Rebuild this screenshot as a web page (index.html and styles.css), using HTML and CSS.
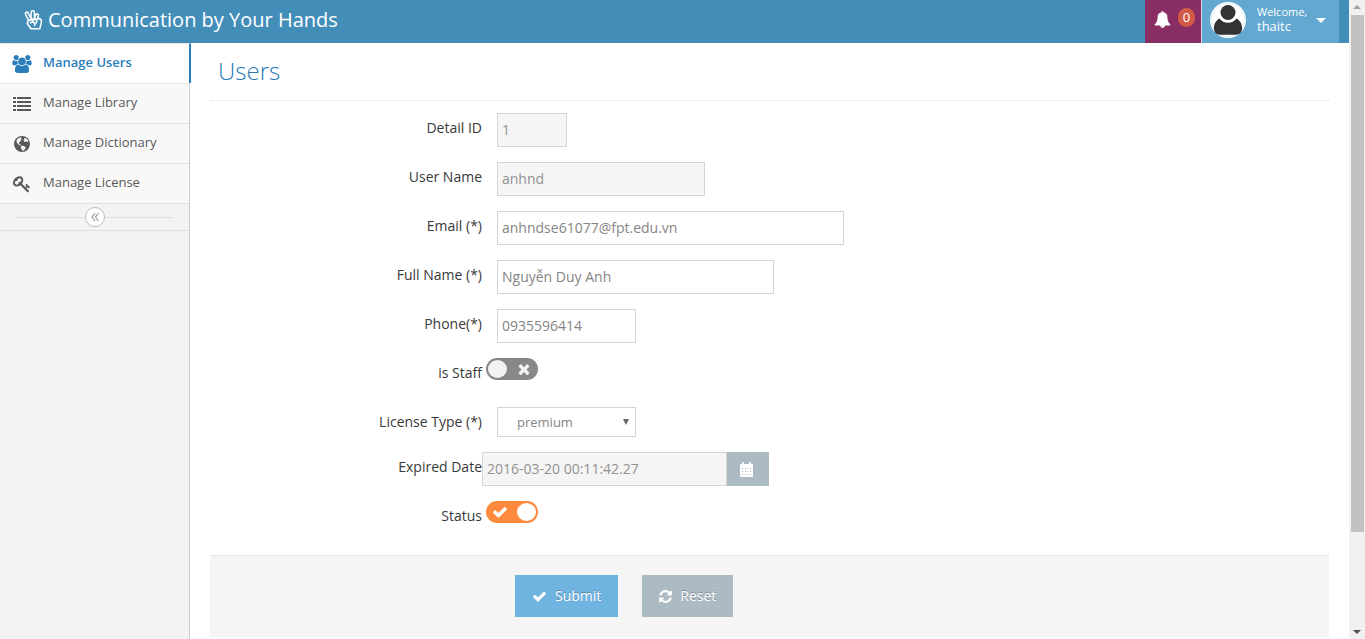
FILE: index.html
```html
<!DOCTYPE html>
<html lang="en">
<head>
<meta charset="utf-8">
<title>Communication by Your Hands</title>
<link rel="stylesheet" href="styles.css">
</head>
<body>
<svg class="sprite" aria-hidden="true">
  <symbol id="check" viewBox="0 0 1792 1792"><path d="M1671 566q0 40-28 68l-724 724-136 136q-28 28-68 28t-68-28l-136-136-362-362q-28-28-28-68t28-68l136-136q28-28 68-28t68 28l294 295 656-657q28-28 68-28t68 28l136 136q28 28 28 68z"/></symbol>
  <symbol id="times" viewBox="0 0 1792 1792"><path d="M1490 1322q0 40-28 68l-136 136q-28 28-68 28t-68-28l-294-294-294 294q-28 28-68 28t-68-28l-136-136q-28-28-28-68t28-68l294-294-294-294q-28-28-28-68t28-68l136-136q28-28 68-28t68 28l294 294 294-294q28-28 68-28t68 28l136 136q28 28 28 68t-28 68l-294 294 294 294q28 28 28 68z"/></symbol>
  <symbol id="refresh" viewBox="0 0 1792 1792"><path d="M1639 1056q0 5-1 7-64 268-268 434.500t-478 166.500q-146 0-282.500-55t-243.500-157l-129 129q-19 19-45 19t-45-19-19-45v-448q0-26 19-45t45-19h448q26 0 45 19t19 45-19 45l-137 137q71 66 161 102t187 36q134 0 250-65t186-179q11-17 53-117 8-23 30-23h192q13 0 22.500 9.500t9.500 22.500zm25-800v448q0 26-19 45t-45 19h-448q-26 0-45-19t-19-45 19-45l138-138q-148-137-349-137-134 0-250 65t-186 179q-11 17-53 117-8 23-30 23h-199q-13 0-22.500-9.500t-9.500-22.500v-7q65-268 270-434.500t480-166.500q146 0 284 55.500t245 156.500l130-129q19-19 45-19t45 19 19 45z"/></symbol>
  <symbol id="users" viewBox="-64 0 1920 1792"><path d="M529 896q-162 5-265 128h-134q-82 0-138-40.500t-56-118.500q0-353 124-353 6 0 43.500 21t97.500 42.500 119 21.500q67 0 133-23-5 37-5 66 0 139 81 256zm1071 637q0 120-73 189.500t-194 69.500h-874q-121 0-194-69.500t-73-189.500q0-53 3.500-103.500t14-109 26.500-108.500 43-97.500 62-81 85.500-53.500 111.500-20q10 0 43 21.500t73 48 107 48 135 21.500 135-21.500 107-48 73-48 43-21.500q61 0 111.500 20t85.500 53.500 62 81 43 97.500 26.500 108.500 14 109 3.500 103.500zm-1024-1277q0 106-75 181t-181 75-181-75-75-181 75-181 181-75 181 75 75 181zm704 384q0 159-112.500 271.500t-271.500 112.500-271.500-112.500-112.500-271.500 112.500-271.500 271.500-112.500 271.500 112.500 112.500 271.500zm576 225q0 78-56 118.500t-138 40.500h-134q-103-123-265-128 81-117 81-256 0-29-5-66 66 23 133 23 59 0 119-21.500t97.500-42.500 43.500-21q124 0 124 353zm-128-609q0 106-75 181t-181 75-181-75-75-181 75-181 181-75 181 75 75 181z"/></symbol>
  <symbol id="list" viewBox="0 0 18 18"><path d="M0 2h3v2H0zM4 2h14v2H4zM0 6h3v2H0zM4 6h14v2H4zM0 10h3v2H0zM4 10h14v2H4zM0 14h3v2H0zM4 14h14v2H4z"/></symbol>
  <symbol id="globe" viewBox="0 0 18 18"><circle cx="9" cy="9" r="8"/><path fill="#f8f8f8" d="M5 3.500L7.500 2.200l1 .8-.8 1.300.9.8-1.500 1.200L5.800 8l.8 1.400 1.700.6-.8.8L5 9.300 3.500 6.800l.2-1.700zM11 3l2.500.6 1.800 2.200-.4 1.500-1.700-1-1.400.6-1.300-1.200.9-1.200zM8.500 10.700l2.500.3 1.800 1.500-.9 1.800-2 1.900-1-1.800-1.200-1.900z"/></symbol>
  <symbol id="key" viewBox="0 0 1792 1792"><path d="M832 512q0-80-56-136t-136-56-136 56-56 136q0 42 19 83-41-19-83-19-80 0-136 56t-56 136 56 136 136 56 136-56 56-136q0-42-19-83 41 19 83 19 80 0 136-56t56-136zm851 704q0 17-49 66t-66 49q-9 0-28.500-16t-36.500-33-38.500-40-24.500-26l-96 96 220 220q28 28 28 68 0 42-39 81t-81 39q-40 0-68-28l-671-671q-176 131-365 131-163 0-265.500-102.500t-102.500-265.500q0-160 95-313t248-248 313-95q163 0 265.500 102.500t102.500 265.500q0 189-131 365l355 355 96-96q-3-3-26-24.500t-40-38.500-33-36.500-16-28.500q0-17 49-66t66-49q13 0 23 10 6 6 46 44.500t82 79.500 86.500 86 73 78 28.500 41z"/></symbol>
  <symbol id="bell" viewBox="0 0 1792 1792"><path d="M912 1696q0-16-16-16-59 0-101.500-42.500t-42.500-101.500q0-16-16-16t-16 16q0 73 51.500 124.500t124.500 51.500q16 0 16-16zm816-288q0 52-38 90t-90 38h-448q0 106-75 181t-181 75-181-75-75-181h-448q-52 0-90-38t-38-90q50-42 91-88t85-119.500 74.500-158.500 50-206 19.500-260q0-152 117-282.500t307-158.500q-8-19-8-39 0-40 28-68t68-28 68 28 28 68q0 20-8 39 190 28 307 158.500t117 282.500q0 139 19.500 260t50 206 74.500 158.500 85 119.500 91 88z"/></symbol>
  <symbol id="calendar" viewBox="0 0 15 15"><path fill-rule="evenodd" d="M3 2V1q0-1 1-1t1 1v1h5V1q0-1 1-1t1 1v1h1q1 0 1 1v11q0 1-1 1H2q-1 0-1-1V3q0-1 1-1zM3 6v1h1V6zM6 6v1h1V6zM8 6v1h1V6zM11 6v1h1V6zM3 9v1h1V9zM6 9v1h1V9zM8 9v1h1V9zM11 9v1h1V9zM3 12v1h1v-1zM6 12v1h1v-1zM8 12v1h1v-1zM11 12v1h1v-1z"/></symbol>
  <symbol id="peace" viewBox="0 0 18 20"><path fill="none" stroke="currentColor" stroke-width="1.500" stroke-linejoin="round" stroke-linecap="round" d="M4 10.500L1 4.200C.3 2.300 2.800 1.200 3.700 3.100L6.600 9V2.500c0-2.200 3.300-2.200 3.300 0V8M9.900 8l1.400-3.200c.8-1.700 3.200-.8 2.600 1L12.900 9M12.900 9c1.900-1 4.200.2 4 2.500-.2 3.300-.8 4.500-1.700 7.300H6.500L3.800 15c-1.200-1.800-1.100-3.400.2-4.500zM4 10.500l3-1.300c2-.7 2.900 1.700 1.200 2.500L6 12.900M8.500 9.800C10 8 12.600 9 12.300 10.800L11.700 13M8.700 12.500c2 .2 2.200 1.800 1.300 3"/></symbol>
</svg>
<div class="window">
  <div class="app">
    <header class="navbar">
      <a class="brand" href="#"><svg class="brand-icon"><use href="#peace"/></svg>Communication by Your Hands</a>
      <div class="navbar-tools">
        <button class="alerts" type="button" aria-label="Notifications"><svg class="bell-icon"><use href="#bell"/></svg><span class="badge">0</span></button>
        <button class="profile" type="button">
          <svg class="avatar" viewBox="0 0 36 36"><circle cx="18" cy="18" r="18" fill="#fff"/><circle cx="18" cy="18" r="16.500" fill="none" stroke="#e3edf3" stroke-width="1"/><circle cx="18" cy="10.500" r="7.500" fill="#333"/><path fill="#333" d="M9.500 16.500c2 2.800 5 4.300 8.500 4.300s6.500-1.500 8.500-4.300c4 2 6 6.500 5.500 11-.4 3-2.500 5.200-5.500 5.200h-17c-3 0-5.100-2.200-5.500-5.200-.5-4.500 1.500-9 5.500-11z"/></svg>
          <span class="welcome"><small>Welcome,</small>thaitc</span>
          <span class="caret"></span>
        </button>
      </div>
    </header>
    <div class="body">
      <nav class="sidebar">
        <ul class="menu">
          <li><a class="item active" href="#"><svg class="item-icon"><use href="#users"/></svg><span>Manage Users</span></a></li>
          <li><a class="item" href="#"><svg class="item-icon"><use href="#list"/></svg><span>Manage Library</span></a></li>
          <li><a class="item" href="#"><svg class="item-icon"><use href="#globe"/></svg><span>Manage Dictionary</span></a></li>
          <li><a class="item" href="#"><svg class="item-icon"><use href="#key"/></svg><span>Manage License</span></a></li>
        </ul>
        <div class="collapse"><button class="collapse-button" type="button" aria-label="Collapse sidebar"><svg width="8" height="10" viewBox="0 0 8 10"><path d="M4 1L1 5l3 4M7.500 1l-3 4 3 4" fill="none" stroke="#999" stroke-width="1.200"/></svg></button></div>
      </nav>
      <main class="content">
        <h1 class="title">Users</h1>
        <form class="form">
          <div class="row"><label for="id">Detail ID</label><div><input class="field c1" id="id" value="1" disabled></div></div>
          <div class="row"><label for="user">User Name</label><div><input class="field c3" id="user" value="anhnd" disabled></div></div>
          <div class="row"><label for="email">Email (*)</label><div><input class="field c5" id="email" value="anhndse61077@fpt.edu.vn"></div></div>
          <div class="row"><label for="name">Full Name (*)</label><div><input class="field c4" id="name" value="Nguyễn Duy Anh"></div></div>
          <div class="row"><label for="phone">Phone(*)</label><div><input class="field c2" id="phone" value="0935596414"></div></div>
          <div class="row near"><label for="staff">is Staff</label><div class="switch"><input type="checkbox" id="staff"><svg class="mark off"><use href="#times"/></svg><svg class="mark on"><use href="#check"/></svg></div></div>
          <div class="row short"><label for="license">License Type (*)</label><div class="select c2"><select id="license"><option>premium</option></select><span class="arrow"></span></div></div>
          <div class="row flush"><label for="date">Expired Date</label><div class="date"><input class="field" id="date" value="2016-03-20 00:11:42.27" disabled><button class="date-button" type="button" aria-label="Pick a date"><svg class="button-icon"><use href="#calendar"/></svg></button></div></div>
          <div class="row near"><label for="status">Status</label><div class="switch"><input type="checkbox" id="status" checked><svg class="mark off"><use href="#times"/></svg><svg class="mark on"><use href="#check"/></svg></div></div>
          <div class="actions">
            <button class="button primary" type="button"><svg class="button-icon"><use href="#check"/></svg>Submit</button>
            <button class="button" type="reset"><svg class="button-icon"><use href="#refresh"/></svg>Reset</button>
          </div>
        </form>
      </main>
    </div>
  </div>
  <div class="scrollbar" aria-hidden="true"><span class="scroll-up"></span><span class="thumb"></span><span class="scroll-down"></span></div>
</div>
</body>
</html>
```
FILE: styles.css
```css
* { box-sizing: border-box; }
body {
  margin: 0;
  background: #fff;
  color: #393939;
  font: 13px/20px "Open Sans", "Noto Sans", sans-serif;
}
button, input, select { font: inherit; margin: 0; border-radius: 0; }
button { border: 0; cursor: pointer; }
a { text-decoration: none; }
svg { display: block; fill: currentColor; flex: none; }
.sprite { position: absolute; width: 0; height: 0; }

.window { display: flex; min-height: 100vh; }
.app { flex: 1; min-width: 0; display: flex; flex-direction: column; }

/* top bar */
.navbar {
  display: flex;
  justify-content: space-between;
  height: 43px;
  padding: 0 10px 0 24px;
  background: #438eb9;
  color: #fff;
}
.brand {
  display: flex;
  align-items: center;
  gap: 5px;
  height: 40px;
  color: #fff;
  font-size: 20px;
}
.brand-icon { width: 19px; height: 20px; }
.navbar-tools { display: flex; }
.alerts {
  display: flex;
  align-items: flex-start;
  gap: 7px;
  width: 56px;
  padding: 8px 6px 0 9px;
  background: #892e65;
  color: #fff;
}
.bell-icon { width: 17px; height: 17px; margin-top: 3px; }
.badge {
  width: 17px;
  height: 19px;
  border-radius: 9px;
  background: #d15b47;
  line-height: 18px;
  text-align: center;
}
.profile {
  display: flex;
  align-items: center;
  width: 138px;
  padding: 0 13px 3px 8px;
  border-left: 1px solid #ddd;
  background: #62a8d1;
  color: #fff;
  text-align: left;
}
.avatar { width: 36px; height: 36px; }
.welcome { flex: 1; padding: 0 0 2px 11px; line-height: 15px; }
.welcome small { display: block; font-size: 11px; }
.caret {
  border: 5px solid transparent;
  border-top-color: #fff;
  border-bottom: 0;
}

.body { flex: 1; display: flex; }

/* side menu */
.sidebar { width: 190px; flex: none; background: #f2f2f2; border-right: 1px solid #ccc; }
.menu { margin: 0; padding: 0; list-style: none; }
.item {
  display: flex;
  align-items: center;
  height: 40px;
  padding-left: 12px;
  border-top: 1px solid #e5e5e5;
  background: #f8f8f8;
  color: #585858;
}
.item span { padding-bottom: 4px; }
.item-icon { width: 20px; height: 18px; margin-right: 11px; }
.item.active {
  margin-right: -2px;
  border-right: 2px solid #2b7dbc;
  background: #fff;
  color: #2b7dbc;
  font-weight: 600;
}
.collapse {
  display: flex;
  align-items: center;
  justify-content: center;
  height: 28px;
  padding: 0 15px;
  border: solid #e0e0e0;
  border-width: 1px 0;
  background: #f3f3f3;
}
.collapse::before, .collapse::after { content: ""; flex: 1; border-top: 1px solid #e0e0e0; }
.collapse-button {
  display: flex;
  align-items: center;
  justify-content: center;
  width: 20px;
  height: 20px;
  padding: 0;
  border: 1px solid #bbb;
  border-radius: 50%;
  background: #fff;
}

/* page */
.content { flex: 1; min-width: 0; padding: 8px 20px 0; }
.title {
  margin: 0 0 12px;
  padding: 0 8px 9px;
  border-bottom: 1px dotted #ddd;
  color: #2679b5;
  font-size: 24px;
  font-weight: 300;
  line-height: 40px;
}
.row {
  display: grid;
  grid-template-columns: 272px minmax(0, 1fr);
  column-gap: 15px;
  min-height: 34px;
  margin-bottom: 15px;
}
.row.short { min-height: 30px; }
.row.near { column-gap: 4px; }
.row.flush { column-gap: 0; }
.row label { padding-top: 5px; font-size: 14px; text-align: right; }
.field {
  display: block;
  height: 34px;
  padding: 4px 4px 6px;
  border: 1px solid #d5d5d5;
  background: #fff;
  color: #858585;
  font-size: 14px;
}
.field:disabled { background: #f5f5f5; color: #939192; }
.c1 { width: 8.4%; }
.c2 { width: 16.7%; }
.c3 { width: 25%; }
.c4 { width: 33.3%; }
.c5 { width: 41.7%; }

.select { position: relative; }
.select select {
  display: block;
  width: 100%;
  height: 30px;
  padding: 3px 19px;
  border: 1px solid #d5d5d5;
  background: #fff;
  color: #858585;
  appearance: none;
}
.arrow {
  position: absolute;
  top: 12px;
  right: 7px;
  border: 3px solid transparent;
  border-top: 6px solid #666;
  border-bottom: 0;
  pointer-events: none;
}

.date { display: flex; width: 33.9%; min-width: 240px; }
.date .field { flex: 1; min-width: 0; }
.date-button { display: flex; align-items: center; justify-content: center; width: 42px; padding: 0 4px 0 0; background: #abbac3; color: #fff; }

.switch { position: relative; width: 52px; height: 22px; color: #fff; }
.switch input {
  display: block;
  width: 52px;
  height: 22px;
  padding: 2px;
  border-radius: 11px;
  background: #888;
  appearance: none;
}
.switch input::before {
  content: "";
  display: block;
  width: 19px;
  height: 18px;
  border-radius: 50%;
  background: #f2f2f2;
}
.switch input:checked { background: #ff893c; }
.switch input:checked::before { margin-left: auto; background: #fff; }
.mark { position: absolute; top: 3px; width: 16px; height: 16px; pointer-events: none; }
.mark.off { right: 6px; color: #f2f2f2; }
.mark.on { left: 6px; display: none; }
.switch input:checked ~ .off { display: none; }
.switch input:checked ~ .on { display: block; }

.actions {
  display: flex;
  gap: 24px;
  margin-top: 20px;
  padding: 19px 20px 20px 305px;
  border-top: 1px solid #e5e5e5;
  background: #f5f5f5;
}
.button {
  display: flex;
  align-items: center;
  gap: 7px;
  height: 42px;
  padding: 0 17px 0 16px;
  background: #abbac3;
  color: #fff;
  font-size: 14px;
  text-shadow: 0 -1px 0 rgba(0, 0, 0, .25);
}
.button.primary { gap: 8px; padding: 0 17px; background: #6fb3e0; }
.button-icon { width: 15px; height: 15px; }

/* scroll track */
.scrollbar {
  display: flex;
  flex-direction: column;
  align-items: center;
  width: 16px;
  height: 100vh;
  position: sticky;
  top: 0;
  padding: 5px 0;
  background: #f1f1f1;
}
.scroll-up, .scroll-down { border: 4px solid transparent; }
.scroll-up { border-top: 0; border-bottom-color: #a3a3a3; }
.scroll-down { margin-top: auto; border-bottom: 0; border-top-color: #505050; }
.thumb { flex: 0 0 82.2%; width: 13px; margin-top: 6px; background: #c1c1c1; }
```
